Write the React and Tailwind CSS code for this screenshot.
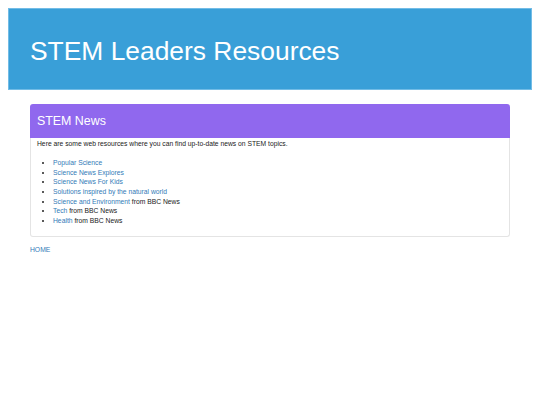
export default function App() {
  const items = [
    ["Popular Science", ""],
    ["Science News Explores", ""],
    ["Science News For Kids", ""],
    ["Solutions inspired by the natural world", ""],
    ["Science and Environment", " from BBC News"],
    ["Tech", " from BBC News"],
    ["Health", " from BBC News"],
  ];
  return (
    <div
      className="min-h-[405px] bg-white p-[8px]"
      style={{ fontFamily: '"Liberation Sans", Arial, sans-serif' }}
    >
      <div className="h-[82px] border border-[#72bce6] bg-[#399fd8] pl-[21px] pt-[28px]">
        <h1 className="text-[26.4px] leading-[29px] font-normal text-white">
          STEM Leaders Resources
        </h1>
      </div>
      <div className="mx-[22px] mt-[14px]">
        <div className="h-[34px] rounded-t-[3px] bg-[#9068ee] pl-[7px] pt-[11px]">
          <h3 className="text-[12.4px] leading-[13.6px] font-normal text-white">
            STEM News
          </h3>
        </div>
        <div className="rounded-b-[3px] border-x border-b border-[#e4e4e4] pl-[6px] pr-[6px] pt-[1px] pb-[10px] text-[6.75px] leading-[9.65px] text-[#222]">
          <p>Here are some web resources where you can find up-to-date news on STEM topics.</p>
          <ul className="mt-[9.5px] list-disc pl-[16px]">
            {items.map(([link, rest]) => (
              <li key={link}>
                <a href="#" className="text-[#337ab7]">{link}</a>
                {rest}
              </li>
            ))}
          </ul>
        </div>
      </div>
      <div className="mt-[8px] pl-[22px] text-[6.75px] leading-[9.65px]">
        <a href="#" className="text-[#337ab7]">HOME</a>
      </div>
    </div>
  );
}
